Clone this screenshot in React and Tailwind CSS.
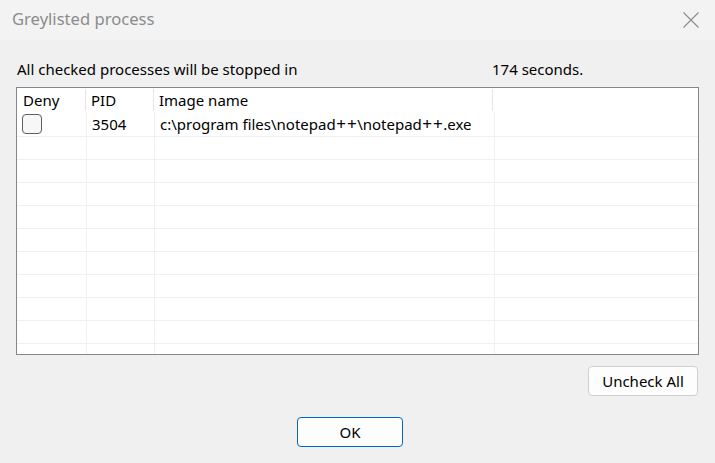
export default function App() {
  const font = { fontFamily: '"Noto Sans", "Open Sans", sans-serif' };
  const rows = Array.from({ length: 10 });
  const P = () => <span className="mx-[0.5px] text-[17px] leading-none">+</span>;
  return (
    <div className="w-[715px] h-[463px] bg-[#f0f0f0] flex flex-col overflow-hidden text-[15px] text-black" style={font}>
      <div className="h-[40px] bg-[#f3f3f3] flex items-center justify-between pl-[12px] pr-[16px]">
        <span className="text-[16.6px] text-[#8c8c8c] leading-none -mt-[1px]">Greylisted process</span>
        <svg width="16" height="16" viewBox="0 0 16 16" className="-mt-[1px]">
          <path d="M0.5 0.5 L15.5 15.5 M15.5 0.5 L0.5 15.5" stroke="#8a8a8a" strokeWidth="1.1" fill="none" />
        </svg>
      </div>
      <div className="relative flex h-[47px] pt-[19px] pl-[17px] leading-[20px]">
        <span className="w-[475px]">All checked processes will be stopped in</span>
        <span>174 seconds.</span>
        <div className="absolute left-[493px] bottom-0 w-[25px] h-[1px] bg-[#f0f0f0] z-10"></div>
      </div>
      <div className="mx-[16px] h-[268px] border border-[#82868e] bg-white overflow-hidden">
        <div className="flex h-[24px]">
          <div className="w-[69px] pl-[6px] border-r border-[#e5e5e5] my-[1px] leading-[23px]">Deny</div>
          <div className="w-[68px] pl-[5px] border-r border-[#e5e5e5] my-[1px] leading-[23px]">PID</div>
          <div className="w-[339px] pl-[5px] border-r border-[#e5e5e5] my-[1px] leading-[23px]">Image name</div>
          <div className="flex-1"></div>
        </div>
        <div className="flex h-[25px] border-b border-[#f0f0f0]">
          <div className="w-[70px] border-r border-[#f0f0f0] flex items-center pl-[5px]">
            <div className="w-[20px] h-[20px] rounded-[4px] border border-[#5f5f5f] bg-[#f7f7f7]"></div>
          </div>
          <div className="w-[68px] border-r border-[#f0f0f0] pl-[5px] leading-[24px]">3504</div>
          <div className="w-[340px] border-r border-[#f0f0f0] pl-[5px] leading-[24px] whitespace-nowrap">
            c:\program files\notepad<P /><P />\notepad<P /><P />.exe
          </div>
          <div className="flex-1"></div>
        </div>
        {rows.map((_, i) => (
          <div key={i} className="flex h-[23px] border-b border-[#f0f0f0]">
            <div className="w-[70px] border-r border-[#f0f0f0]"></div>
            <div className="w-[68px] border-r border-[#f0f0f0]"></div>
            <div className="w-[340px] border-r border-[#f0f0f0]"></div>
            <div className="flex-1"></div>
          </div>
        ))}
      </div>
      <div className="flex justify-end pr-[17px] pt-[11px]">
        <button className="w-[110px] h-[30px] rounded-[4px] border border-[#d0d0d0] bg-[#fdfdfd] leading-none">Uncheck All</button>
      </div>
      <div className="flex justify-center pt-[21px] pr-[15px]">
        <button className="w-[106px] h-[30px] rounded-[4px] border border-[#0067c0] bg-[#fdfdfd] leading-none">OK</button>
      </div>
    </div>
  );
}
